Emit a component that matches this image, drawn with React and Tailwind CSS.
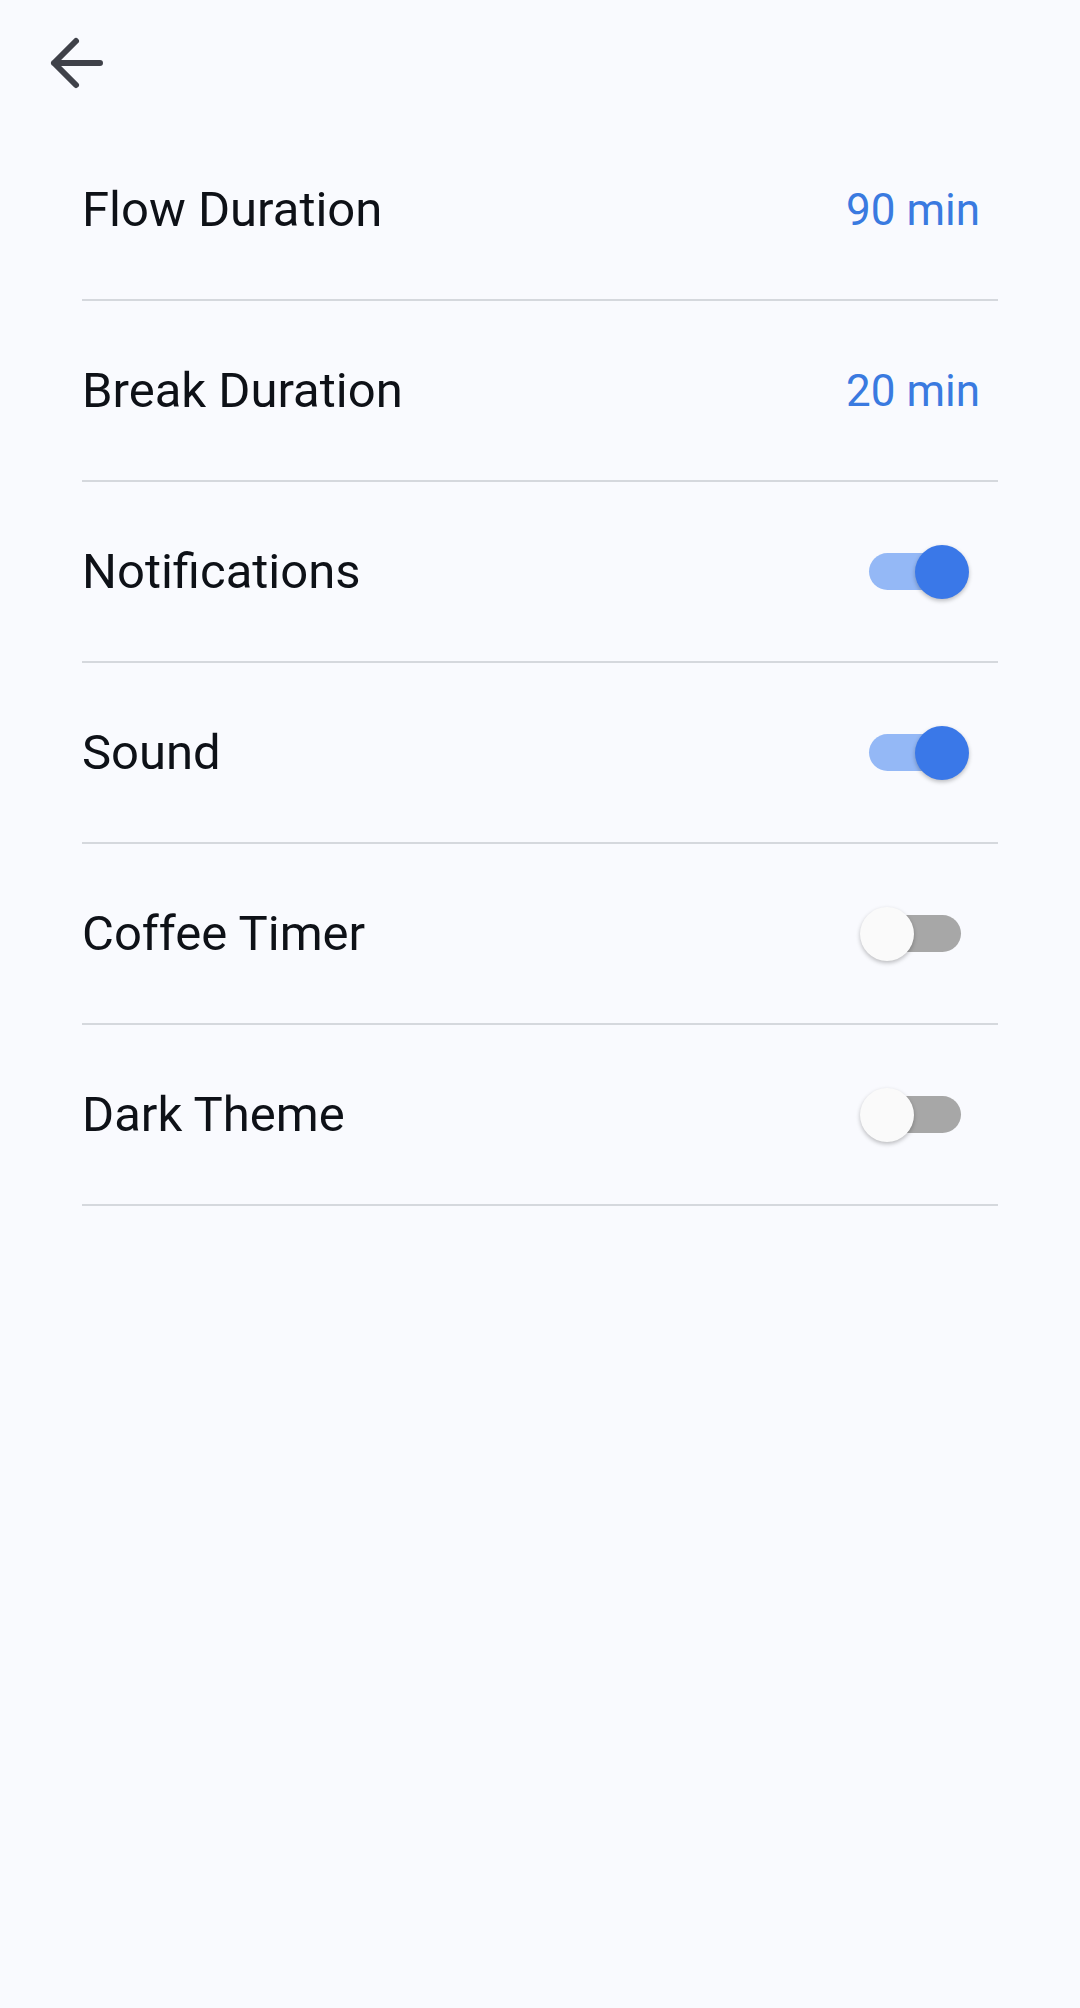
// Settings screen — flow timer preferences
import { useState } from 'react'

function BackArrow() {
  return (
    <svg width="60" height="60" viewBox="0 0 60 60" fill="none" xmlns="http://www.w3.org/2000/svg">
      <path d="M53 30H7M29 8L7 30L29 52" stroke="#3f4149" strokeWidth="6" strokeLinecap="round" strokeLinejoin="round"/>
    </svg>
  )
}

function Toggle({ on, onChange }) {
  return (
    <button onClick={onChange} className="relative w-[110px] h-[54px] flex items-center">
      <span className={`absolute left-[9px] w-[92px] h-[37px] rounded-full ${on ? 'bg-[#94b8f6]' : 'bg-[#a7a7a7]'}`}/>
      <span
        className={`absolute top-0 w-[54px] h-[54px] rounded-full shadow-[0_2px_4px_rgba(0,0,0,0.25)] ${on ? 'left-[55px] bg-[#3a78e8]' : 'left-0 bg-[#fafafa]'}`}
      />
    </button>
  )
}

function Row({ label, children, right = 'pr-[18px]' }) {
  return (
    <div className="h-[181px] flex items-center justify-between border-b-2 border-[#d5d8dd]">
      <span className="text-[49px] leading-none text-[#0e1117]">{label}</span>
      <div className={right}>{children}</div>
    </div>
  )
}

export default function App() {
  const [toggles, setToggles] = useState({ notifications: true, sound: true, coffee: false, dark: false })
  const flip = (k) => setToggles((t) => ({ ...t, [k]: !t[k] }))

  return (
    <div className="min-h-screen w-full bg-[#f9fafe]" style={{ fontFamily: 'Roboto, "Noto Sans", sans-serif' }}>
      {/* Header */}
      <div className="h-[120px] pl-[47px] pt-[33px]">
        <BackArrow/>
      </div>

      {/* Settings list */}
      <div className="px-[82px]">
        <Row label="Flow Duration">
          <span className="text-[44px] leading-none text-[#3a7ae0]">90 min</span>
        </Row>
        <Row label="Break Duration">
          <span className="text-[44px] leading-none text-[#3a7ae0]">20 min</span>
        </Row>
        <Row label="Notifications" right="pr-[28px]">
          <Toggle on={toggles.notifications} onChange={() => flip('notifications')}/>
        </Row>
        <Row label="Sound" right="pr-[28px]">
          <Toggle on={toggles.sound} onChange={() => flip('sound')}/>
        </Row>
        <Row label="Coffee Timer" right="pr-[28px]">
          <Toggle on={toggles.coffee} onChange={() => flip('coffee')}/>
        </Row>
        <Row label="Dark Theme" right="pr-[28px]">
          <Toggle on={toggles.dark} onChange={() => flip('dark')}/>
        </Row>
      </div>
    </div>
  )
}
